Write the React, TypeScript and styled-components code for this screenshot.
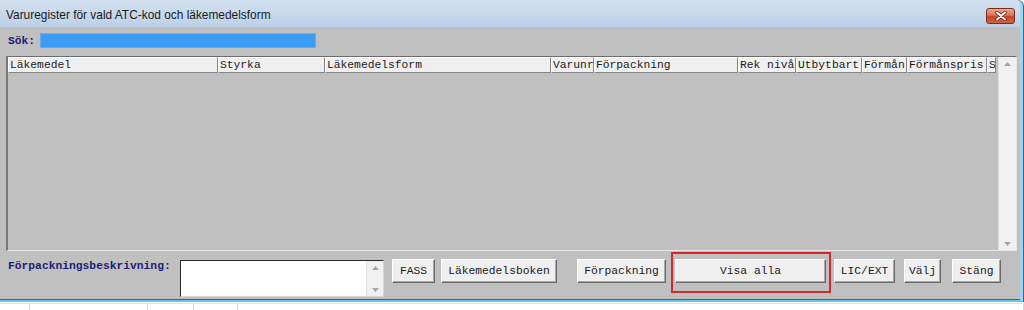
import React from "react";
import styled, { createGlobalStyle } from "styled-components";

const Global = createGlobalStyle`
  html, body { margin: 0; padding: 0; background: #ffffff; }
  body { width: 1024px; height: 310px; overflow: hidden; font-family: "Liberation Mono", "Courier New", monospace; }
`;

const Screen = styled.div`
  width: 1024px;
  height: 310px;
  display: flex;
  flex-direction: column;
  background: #ffffff;
  overflow: hidden;
`;

const Window = styled.div`
  width: 1023px;
  box-sizing: border-box;
  display: flex;
  flex-direction: column;
  background: #c0c0c0;
  border-right: 3px solid #9fd3ee;
  border-bottom: 2px solid #62c6ee;
  box-shadow: 1px 0 0 #4d5f73, 0 -1px 0 #4d5f73 inset;
  border-top-right-radius: 6px;
  overflow: hidden;
`;

const TitleBar = styled.div`
  height: 28px;
  display: flex;
  align-items: flex-start;
  justify-content: space-between;
  background: linear-gradient(#d2e1f1, #bcd0e7);
  border-bottom: 1px solid #b3c5da;
  box-sizing: border-box;
`;

const Title = styled.div`
  font-family: "Liberation Sans", Arial, sans-serif;
  font-size: 11.9px;
  color: #1b1b1b;
  padding: 9px 0 0 6px;
  line-height: 13px;
`;

const CloseButton = styled.div`
  width: 29px;
  height: 16px;
  margin: 8px 5px 0 0;
  box-sizing: border-box;
  border: 1px solid #7b2c1e;
  border-radius: 3px;
  background: linear-gradient(#eba68f 0%, #d7745a 45%, #c2462a 55%, #d4623e 100%);
  display: flex;
  align-items: center;
  justify-content: center;
`;

const Content = styled.div`
  height: 272px;
  display: flex;
  flex-direction: column;
  padding-top: 5px;
  box-sizing: border-box;
`;

const SearchRow = styled.div`
  display: flex;
  align-items: center;
  height: 15px;
  padding-left: 8px;
`;

const FieldLabel = styled.span<{ $w: number }>`
  width: ${(p) => p.$w}px;
  flex: none;
  font-size: 11.3px;
  font-weight: bold;
  color: #1c1c78;
  line-height: 14px;
  white-space: nowrap;
`;

const SearchInput = styled.div`
  width: 276px;
  height: 15px;
  box-sizing: border-box;
  background: #3b9cf6;
  border: 1px solid #6aa9e0;
  border-top-color: #8fa7bd;
`;

const TableFrame = styled.div`
  margin: 8px 0 0 6px;
  width: 1011px;
  height: 195px;
  box-sizing: border-box;
  border-top: 1px solid #6c6c6c;
  border-left: 2px solid #777777;
  border-right: 1px solid #e6e6e6;
  border-bottom: 1px solid #e6e6e6;
  display: grid;
  grid-template-columns: 990px 18px;
`;

const GridArea = styled.div`
  background: #c0c0c0;
`;

const HeaderRow = styled.div`
  display: flex;
  height: 16px;
`;

const HeaderCell = styled.div<{ $w: number }>`
  width: ${(p) => p.$w}px;
  flex: none;
  box-sizing: border-box;
  height: 16px;
  background: #efefef;
  border-top: 1px solid #ffffff;
  border-left: 1px solid #ffffff;
  border-right: 1px solid #858585;
  border-bottom: 1px solid #858585;
  padding-left: 1px;
  font-size: 11.3px;
  line-height: 14px;
  color: #1a1a1a;
  white-space: nowrap;
  overflow: hidden;
`;

const VScroll = styled.div`
  background: #f0f0f0;
  border-left: 1px solid #e2e2e2;
  display: flex;
  flex-direction: column;
  justify-content: space-between;
  align-items: center;
  padding: 5px 0 4px;
  box-sizing: border-box;
`;

const BottomRow = styled.div`
  display: flex;
  align-items: flex-start;
  padding: 8px 0 0 8px;
`;

const NoteBox = styled.div`
  margin: 1px 0 0 9px;
  width: 204px;
  height: 37px;
  box-sizing: border-box;
  background: #ffffff;
  border-top: 1px solid #2a2a2a;
  border-left: 1px solid #2a2a2a;
  border-right: 1px solid #d8d8d8;
  border-bottom: 1px solid #d8d8d8;
  display: flex;
  justify-content: flex-end;
`;

const NoteScroll = styled.div`
  width: 17px;
  background: #f0f0f0;
  border-left: 1px solid #e0e0e0;
  display: flex;
  flex-direction: column;
  justify-content: space-between;
  align-items: center;
  padding: 5px 0 4px;
  box-sizing: border-box;
`;

const Button = styled.div<{ $w: number; $ml: number }>`
  width: ${(p) => p.$w}px;
  margin-left: ${(p) => p.$ml}px;
  height: 24px;
  flex: none;
  box-sizing: border-box;
  background: #efefef;
  border-top: 1px solid #ffffff;
  border-left: 1px solid #ffffff;
  border-right: 1px solid #6a6a6a;
  border-bottom: 1px solid #6a6a6a;
  box-shadow: inset -1px -1px 0 #a8a8a8;
  display: flex;
  align-items: center;
  justify-content: center;
  font-size: 11.3px;
  color: #1a1a1a;
  white-space: nowrap;
`;

const Highlight = styled.div<{ $ml: number }>`
  position: relative;
  margin-left: ${(p) => p.$ml}px;
  display: flex;
  &::after {
    content: "";
    position: absolute;
    left: -4px;
    right: -5px;
    top: -7px;
    bottom: -10px;
    border: 2px solid #d6272b;
    pointer-events: none;
  }
`;

const Sheet = styled.div`
  flex: 1;
  display: flex;
  border-top: 1px solid #e4e4e4;
  margin-top: 1px;
`;

const SheetCol = styled.div<{ $w: number }>`
  width: ${(p) => p.$w}px;
  flex: none;
  border-right: 1px solid #d4d8df;
  box-sizing: border-box;
`;

const Caret = ({ down }: { down?: boolean }) => (
  <svg width="7" height="4" viewBox="0 0 7 4">
    <path d={down ? "M0 0 H7 L3.5 4 Z" : "M0 4 H7 L3.5 0 Z"} fill="#a5a5a5" />
  </svg>
);

const CloseIcon = () => (
  <svg width="12" height="10" viewBox="0 0 12 10">
    <path d="M2 1.5 L10 8.5 M10 1.5 L2 8.5" stroke="#5a1a10" strokeWidth="3.4" strokeLinecap="round" />
    <path d="M2 1.5 L10 8.5 M10 1.5 L2 8.5" stroke="#ffffff" strokeWidth="2" strokeLinecap="round" />
  </svg>
);

const columns = [
  { label: "Läkemedel", w: 210 },
  { label: "Styrka", w: 107 },
  { label: "Läkemedelsform", w: 226 },
  { label: "Varunr", w: 43 },
  { label: "Förpackning", w: 144 },
  { label: "Rek nivå", w: 58 },
  { label: "Utbytbart", w: 66 },
  { label: "Förmån", w: 45 },
  { label: "Förmånspris", w: 80 },
  { label: "S", w: 9 },
];

const sheetCols = [30, 118, 46, 44, 786];

export default function App() {
  return (
    <Screen>
      <Global />
      <Window>
        <TitleBar>
          <Title>Varuregister för vald ATC-kod och läkemedelsform</Title>
          <CloseButton>
            <CloseIcon />
          </CloseButton>
        </TitleBar>
        <Content>
          <SearchRow>
            <FieldLabel $w={32}>Sök:</FieldLabel>
            <SearchInput />
          </SearchRow>
          <TableFrame>
            <GridArea>
              <HeaderRow>
                {columns.map((c) => (
                  <HeaderCell key={c.label} $w={c.w}>
                    {c.label}
                  </HeaderCell>
                ))}
              </HeaderRow>
            </GridArea>
            <VScroll>
              <Caret />
              <Caret down />
            </VScroll>
          </TableFrame>
          <BottomRow>
            <FieldLabel $w={163}>Förpackningsbeskrivning:</FieldLabel>
            <NoteBox>
              <NoteScroll>
                <Caret />
                <Caret down />
              </NoteScroll>
            </NoteBox>
            <Button $w={43} $ml={8}>FASS</Button>
            <Button $w={116} $ml={6}>Läkemedelsboken</Button>
            <Button $w={89} $ml={20}>Förpackning</Button>
            <Highlight $ml={9}>
              <Button $w={151} $ml={0}>Visa alla</Button>
            </Highlight>
            <Button $w={61} $ml={8}>LIC/EXT</Button>
            <Button $w={37} $ml={9}>Välj</Button>
            <Button $w={49} $ml={11}>Stäng</Button>
          </BottomRow>
        </Content>
      </Window>
      <Sheet>
        {sheetCols.map((w, i) => (
          <SheetCol key={i} $w={w} />
        ))}
      </Sheet>
    </Screen>
  );
}
